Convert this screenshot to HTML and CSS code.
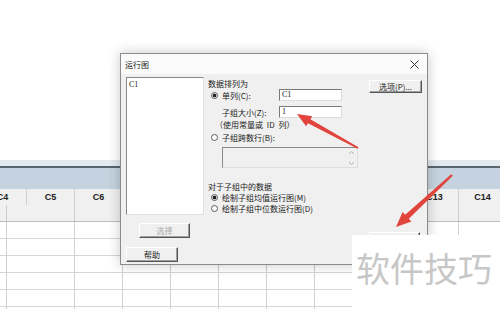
FILE: index.html
```html
<!DOCTYPE html>
<html lang="zh-CN">

<head>
  <meta charset="UTF-8">
  <meta name="viewport" content="width=device-width, initial-scale=1.0">
  <title>运行图</title>
  <link rel="stylesheet" href="styles.css">
</head>

<body>
  <div class="sheet">
    <div class="band-light"></div>
    <div class="band"></div>
    <!-- columns C7..C12 sit under the dialog -->
    <div class="grid-head">
      <div class="col-head">C4</div>
      <div class="col-head">C5</div>
      <div class="col-head">C6</div>
      <div class="col-head"></div>
      <div class="col-head"></div>
      <div class="col-head"></div>
      <div class="col-head"></div>
      <div class="col-head"></div>
      <div class="col-head"></div>
      <div class="col-head">C13</div>
      <div class="col-head">C14</div>
    </div>
    <div class="name-row"></div>
    <div class="rows"></div>
  </div>

  <div class="dialog">
    <div class="titlebar">
      <span>运行图</span>
      <svg class="close" width="9" height="9" viewBox="0 0 9 9">
        <path d="M0.5 0.5 L8.5 8.5 M8.5 0.5 L0.5 8.5" stroke="#333" stroke-width="1" fill="none" />
      </svg>
    </div>
    <div class="dialog-body">
      <div class="col-left">
        <div class="listbox">C1</div>
        <div class="btn btn-select">选择</div>
        <div class="btn btn-help">帮助</div>
      </div>
      <div class="col-main">
        <div class="line">数据排列为</div>
        <div class="line option">
          <span class="radio checked"></span>
          <span class="label">单列(C):</span>
          <span class="field">C1</span>
        </div>
        <div class="line sub">
          <span class="label">子组大小(Z):</span>
          <span class="field">1</span>
        </div>
        <div class="line note">（使用常量或 ID 列）</div>
        <div class="line option option-b">
          <span class="radio"></span>子组跨数行(B):
        </div>
        <div class="multi">
          <svg width="7" height="16" viewBox="0 0 7 16">
            <path d="M1 4 L3.5 1.5 L6 4 M1 12 L3.5 14.5 L6 12" stroke="#b0b0b0" stroke-width="1" fill="none" />
          </svg>
        </div>
        <div class="line small group">对于子组中的数据</div>
        <div class="line small option">
          <span class="radio checked"></span>绘制子组均值运行图(M)
        </div>
        <div class="line small option">
          <span class="radio"></span>绘制子组中位数运行图(D)
        </div>
      </div>
      <div class="col-right">
        <div class="btn btn-options">选项(P)...</div>
        <!-- OK button, label hidden by the watermark -->
        <div class="btn btn-ok"></div>
      </div>
    </div>
  </div>

  <svg class="arrows" width="500" height="309" viewBox="0 0 500 309">
    <polygon fill="#e0443c"
      points="297,114 312.3,116.3 310.4,119.2 358.5,147.2 357.5,148.8 308.0,123.2 306.1,126.3" />
    <polygon fill="#e0443c"
      points="396,227 411.4,221.6 408.8,218.8 452.8,175.8 451.2,174.2 405.2,214.8 402.6,212.0" />
  </svg>

  <div class="watermark">软件技巧</div>
</body>

</html>
```

FILE: styles.css
```css
html {
  box-sizing: border-box;
}

*,
*::before,
*::after {
  box-sizing: inherit;
}

body {
  position: relative;
  margin: 0;
  width: 500px;
  height: 309px;
  overflow: hidden;
  background: #fff;
  color: #1a1a1a;
  font-family: "Noto Sans CJK SC", "Liberation Sans", sans-serif;
  font-size: 8px;
}

/* worksheet behind the dialog */

.sheet {
  padding-top: 160px;
}

.band-light {
  height: 6px;
  background: #e3eaf0;
}

.band {
  height: 23px;
  background: #c4d3df;
  border-top: 2px solid #58646e;
}

.grid-head {
  display: grid;
  grid-template-columns: repeat(11, 48px);
  margin-left: -21px;
  background: #f0f0f0;
}

.col-head {
  height: 16px;
  line-height: 16px;
  text-align: center;
  border-right: 1px solid #cfcfcf;
  font-family: "Liberation Sans", sans-serif;
  font-weight: bold;
  font-size: 9px;
  color: #222;
}

.name-row {
  height: 17px;
  background-color: #f0f0f0;
  background-image: repeating-linear-gradient(to right, transparent 0 47px, #cfcfcf 47px 48px);
  background-position: 27px 0;
  border-bottom: 1px solid #bdbdbd;
}

.rows {
  height: 100px;
  background-image:
    repeating-linear-gradient(to right, transparent 0 47px, #d0d0d0 47px 48px),
    repeating-linear-gradient(to bottom, transparent 0 16px, #d6d6d6 16px 17px);
  background-position: 27px 0, 0 0;
}

/* dialog */

.dialog {
  position: absolute;
  left: 120px;
  top: 53px;
  width: 308px;
  height: 212px;
  background: #f0f0f0;
  border: 1px solid #8c8c8c;
  box-shadow: 0 0 12px rgba(0, 0, 0, 0.22);
}

.titlebar {
  display: flex;
  justify-content: space-between;
  align-items: center;
  height: 20px;
  padding: 0 8px 0 4px;
  background: #fbfbfb;
  color: #222;
}

.dialog-body {
  display: flex;
  padding: 3px 5px 0 5px;
}

.col-left {
  width: 78px;
  margin-right: 4px;
}

.listbox {
  height: 138px;
  padding: 2px 2px;
  background: #fff;
  border: 1px solid #8a8a8a;
  border-right-color: #e0e0e0;
  border-bottom-color: #e0e0e0;
  font-family: "Liberation Serif", serif;
  line-height: 10px;
}

.btn {
  height: 15px;
  line-height: 13px;
  text-align: center;
  background: #f0f0f0;
  border: 1px solid #fff;
  border-right-color: #555;
  border-bottom-color: #555;
  box-shadow: inset -1px -1px 0 #a0a0a0;
}

.btn-select {
  width: 51px;
  margin: 8px 0 0 13px;
  color: #a8a8a8;
}

.btn-help {
  width: 52px;
  margin-top: 9px;
}

.col-main {
  width: 150px;
  margin-right: 11px;
}

.line {
  display: flex;
  align-items: center;
  height: 12px;
  white-space: nowrap;
}

.line.small {
  height: 11px;
}

.sub {
  margin-top: 5px;
  padding-left: 14px;
}

.note {
  padding-left: 7px;
  word-spacing: 2px;
}

.option-b {
  margin-top: 1px;
}

.group {
  margin-top: 13px;
}

.radio {
  width: 7px;
  height: 7px;
  margin: 0 4px 0 3px;
  border: 1px solid #5a5a5a;
  border-radius: 50%;
  background: #fff;
  flex: none;
}

.radio.checked {
  background: radial-gradient(circle, #222 0 1.6px, #fff 2.2px);
}

.label {
  width: 57px;
}

.field {
  width: 63px;
  height: 12px;
  padding-left: 2px;
  line-height: 10px;
  background: #fff;
  border: 1px solid #7a7a7a;
  border-right-color: #dcdcdc;
  border-bottom-color: #dcdcdc;
  font-family: "Liberation Serif", serif;
}

.multi {
  display: flex;
  justify-content: flex-end;
  align-items: center;
  width: 136px;
  height: 21px;
  margin: 4px 0 0 14px;
  padding-right: 2px;
  border: 1px solid #8a8a8a;
  border-right-color: #dedede;
  border-bottom-color: #dedede;
}

.col-right {
  width: 53px;
}

.btn-options {
  height: 13px;
  line-height: 11px;
  margin-top: 3px;
}

.btn-ok {
  width: 51px;
  margin-top: 139px;
}

/* overlays on top of the screenshot */

.arrows {
  position: absolute;
  left: 0;
  top: 0;
  pointer-events: none;
}

.watermark {
  position: absolute;
  left: 352px;
  top: 235px;
  width: 148px;
  height: 74px;
  padding: 15px 0 0 4px;
  background: #fff;
  color: #c7c7c7;
  font-size: 34px;
  line-height: 36px;
  white-space: nowrap;
}
```
